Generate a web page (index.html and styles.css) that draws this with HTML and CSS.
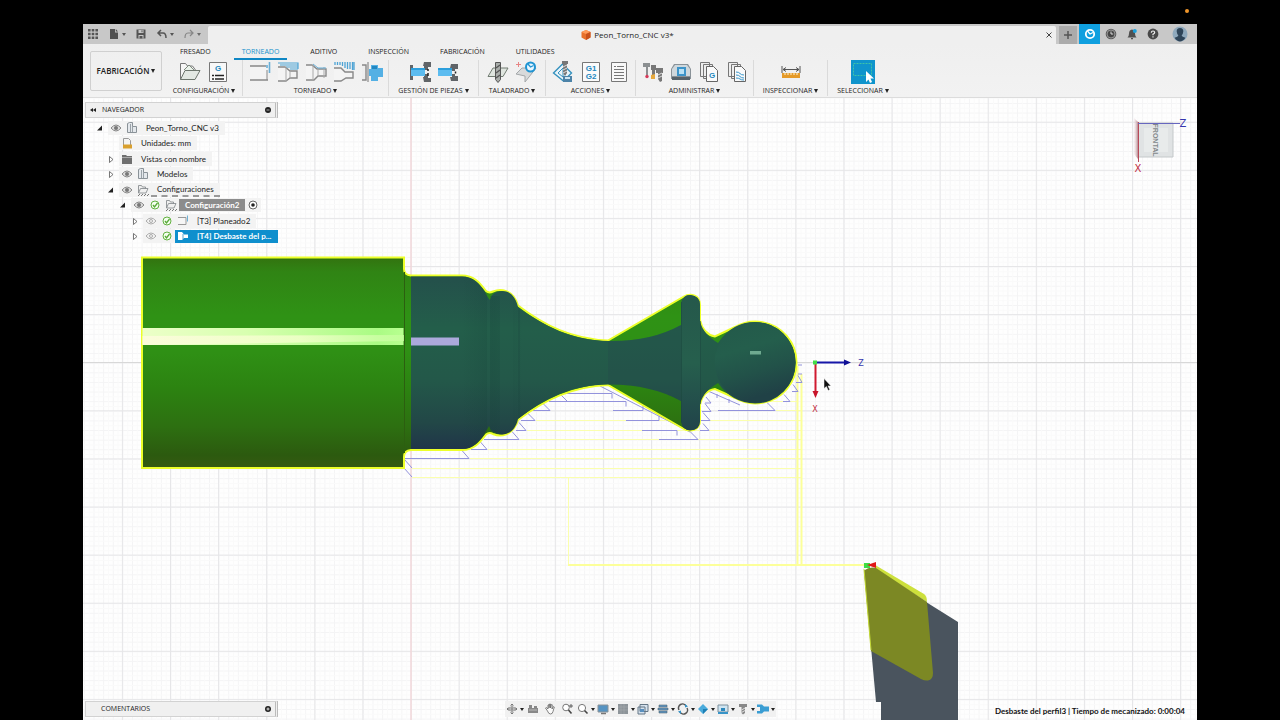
FILE: index.html
```html
<!DOCTYPE html>
<html lang="es">
<head>
<meta charset="utf-8">
<title>Peon_Torno_CNC v3*</title>
<link rel="stylesheet" href="styles.css">
</head>
<body>
<svg class="rec-dot" viewBox="0 0 6 6"><circle cx="3" cy="3" r="2" fill="#f0962a"/></svg>
<div class="app">
  <header class="titlebar">
    <div class="quick">
      <button class="q" aria-label="Panel de datos"><svg viewBox="0 0 12 12"><path d="M1 1h2.600v2.600h-2.600zM4.700 1h2.600v2.600h-2.600zM8.400 1H11v2.600H8.400zM1 4.700h2.600v2.600H1zM4.700 4.700h2.600v2.600H4.700zM8.400 4.700H11v2.600H8.400zM1 8.400h2.600V11H1zM4.700 8.400h2.600V11H4.700zM8.400 8.400H11V11H8.400z" fill="#555"/></svg></button>
      <button class="q wide" aria-label="Archivo"><svg viewBox="0 0 12 12"><path d="M2 1h5v3.500h3V11H2zM7.800 1L10 3.600H7.800z" fill="#505050"/></svg><i class="caret"></i></button>
      <button class="q" aria-label="Guardar"><svg viewBox="0 0 12 12"><path d="M1.500 1.500h9v9h-9z" fill="#555"/><path d="M3.500 2h5v3h-5zM3.500 7h5v3.500h-5z" fill="#c8c8c8"/><path d="M4.500 8h3v2.500h-3zM6.500 2.300h1v2h-1z" fill="#555"/></svg></button>
      <button class="q wide" aria-label="Deshacer"><svg viewBox="0 0 12 12"><path d="M5 2L2 5l3 3M2 5h5q3 0 3 5" fill="none" stroke="#555" stroke-width="1.500"/></svg><i class="caret"></i></button>
      <button class="q wide dim" aria-label="Rehacer"><svg viewBox="0 0 12 12"><path d="M7 2l3 3-3 3M10 5H5Q2 5 2 10" fill="none" stroke="#777" stroke-width="1.200"/></svg><i class="caret"></i></button>
    </div>
    <div class="doc">
      <span class="doc-name"><svg viewBox="0 0 10 10"><path d="M5 0l4.500 2v5.500L5 10 .5 7.500V2z" fill="#e8702a"/><path d="M5 0l4.500 2L5 4 .5 2z" fill="#ff9a58"/><path d="M5 4l4.500-2v5.500L5 10z" fill="#c9501a"/></svg>Peon_Torno_CNC v3*</span>
      <button class="doc-close" aria-label="Cerrar"><svg viewBox="0 0 8 8"><path d="M1.500 1.500l5 5m0-5l-5 5" stroke="#444"/></svg></button>
    </div>
    <div class="account">
      <button class="plus" aria-label="Nueva pestaña"><svg viewBox="0 0 12 12"><path d="M6 2v8M2 6h8" stroke="#555" stroke-width="1.500"/></svg></button>
      <button class="ext" aria-label="Extensiones"><svg viewBox="0 0 12 12"><circle cx="6" cy="6" r="4.200" fill="none" stroke="#fff" stroke-width="1.800"/><path d="M3.500 3l2.500 3L9 4.500" stroke="#fff" fill="none" stroke-width="1.200"/></svg></button>
      <button class="acc" aria-label="Trabajos"><svg viewBox="0 0 12 12"><circle cx="6" cy="6" r="5.300" fill="#5c5c5c"/><circle cx="6" cy="6" r="4" fill="none" stroke="#aaa" stroke-width=".7"/><circle cx="6" cy="6" r="3" fill="#444"/><path d="M6 3.500V6h2.200" stroke="#ddd" fill="none"/></svg></button>
      <button class="acc" aria-label="Notificaciones"><svg viewBox="0 0 12 12"><path d="M1.500 9.500Q3 8 3 5.500 3 2 6 1.500 9 2 9 5.500q0 2.500 1.500 4zM5 10h2v1.300H5z" fill="#505050"/><circle cx="8.800" cy="3" r="2" fill="#1ba0dc"/></svg></button>
      <button class="acc" aria-label="Ayuda"><svg viewBox="0 0 12 12"><circle cx="6" cy="6" r="5.400" fill="#484848"/><path d="M4.300 4.700Q4.400 3 6 3t1.700 1.500Q7.700 5.500 6 6.200V7.300M6 8.200v1.300" stroke="#eee" stroke-width="1.200" fill="none"/></svg></button>
      <button class="acc user" aria-label="Cuenta"><svg viewBox="0 0 16 16"><circle cx="8" cy="8" r="7.500" fill="#8fa9bd"/><path d="M8 2q3.500 0 3.300 3.500Q11 8.500 9.600 9.500q.4 1.200 3.800 2.200Q11 15.500 8 15.500t-5.400-3.800Q6 10.700 6.400 9.500 5 8.500 4.700 5.500 4.500 2 8 2z" fill="#2f4559"/></svg></button>
    </div>
  </header>

  <div class="ribbon">
    <button class="workspace">FABRICACIÓN<i class="caret"></i></button>
    <div class="ribbon-main">
      <nav class="tabs">
        <button>FRESADO</button><button class="on">TORNEADO</button><button>ADITIVO</button><button>INSPECCIÓN</button><button>FABRICACIÓN</button><button>UTILIDADES</button>
      </nav>
      <div class="groups">
        <section class="group">
          <div class="tools">
            <button aria-label="Configuración"><svg viewBox="0 0 22 22"><path d="M1.500 18.500V2.500h5l2 2.500h5l3 4" fill="#f6f6f6" stroke="#777"/><path d="M5 9l5-5 6 6" fill="#eaf2ea" stroke="#7c887c"/><path d="M1.500 18.500L6 9.500h15l-5 9z" fill="#e3e8e3" stroke="#6d756d"/></svg></button>
            <button aria-label="Programa NC"><svg viewBox="0 0 22 22"><path d="M2.500 1.500h17v19h-17z" fill="#f8f8f8" stroke="#777"/><text x="11" y="10" class="svg-g">G</text><path d="M5 14.500h2m1 0h9M5 18h2m1 0h9" stroke="#222" stroke-width="1.300"/></svg></button>
          </div>
          <button class="glabel">CONFIGURACIÓN<i class="caret"></i></button>
        </section>
        <section class="group">
          <div class="tools">
            <button aria-label="Refrentado"><svg viewBox="0 0 22 22"><path d="M1 5h17v14H1" fill="#f4f4f4"/><path d="M1 5h16M1 19h18" stroke="#888" stroke-width="1.600"/><path d="M18 9v10" stroke="#888"/><path d="M20.500 1v11M18 7V4" stroke="#69aed6" stroke-width="1.600"/></svg></button>
            <button aria-label="Perfilado"><svg viewBox="0 0 22 22"><path d="M1 6h7l5 4h7v7h-7l-4 3H1" fill="#f4f4f4" stroke="#888" stroke-width="1.400"/><path d="M1 2h20v6M3 4h18M9 6h12M13 8h8" fill="none" stroke="#4da3d4" stroke-width="1.200"/><path d="M9 6v14M13 10v7" stroke="#aaa"/></svg></button>
            <button aria-label="Acabado"><svg viewBox="0 0 22 22"><path d="M1 4h6l5 4h9v7h-8l-4 4H1" fill="#f4f4f4" stroke="#888" stroke-width="1.400"/><path d="M8 4v15M13 8v7M19 6v11" stroke="#aaa"/><path d="M8 3l5 4h8" fill="none" stroke="#69aed6"/></svg></button>
            <button aria-label="Ranurado"><svg viewBox="0 0 22 22"><path d="M1 7h7l4 4h8v6h-7l-5 3H1" fill="#f4f4f4" stroke="#888" stroke-width="1.400"/><path d="M2 1v3M4.500 1v3M7 1v3M9.500 1v4M12 1v6M14.500 1v7M17 1v7M19.500 1v8M21 1v8" stroke="#4da3d4" stroke-width="1.300"/></svg></button>
            <button aria-label="Tronzado"><svg viewBox="0 0 22 22"><path d="M1 4h4v15H1" fill="#eee" stroke="#888" stroke-width="1.400"/><path d="M7 1v20" stroke="#777"/><path d="M10 4h7v3h5v9h-5v4h-7v-5H8V8h2z" fill="#54b0e4"/><path d="M11 5h5v3h-5z" fill="#2388c2"/></svg></button>
          </div>
          <button class="glabel">TORNEADO<i class="caret"></i></button>
        </section>
        <section class="group">
          <div class="tools">
            <button aria-label="Transferir pieza"><svg viewBox="0 0 22 22"><path d="M1 4h3v4l3 2v3l-3 2v4H1zM15 1h7v5h-3v3h-4V5h-1zM15 21h7v-4h-3v-4h-4v3h-1z" fill="#606468"/><path d="M2 7h14v8H2z" fill="#5cbcf0"/><path d="M2 7h14v2H2z" fill="#2c9fdc"/><path d="M19 8v2m0 2v3" stroke="#222" stroke-width="1.500"/></svg></button>
            <button aria-label="Sujetar pieza"><svg viewBox="0 0 22 22"><path d="M14 3h7v5h-3v2h-3V7h-2zM14 20h7v-5h-3v-2h-3v3h-2z" fill="#606468"/><path d="M1 7h14v8H1z" fill="#5cbcf0"/><path d="M1 7h14v2H1z" fill="#2c9fdc"/><path d="M18.500 10.500v2" stroke="#222" stroke-width="1.500"/></svg></button>
          </div>
          <button class="glabel">GESTIÓN DE PIEZAS<i class="caret"></i></button>
        </section>
        <section class="group">
          <div class="tools">
            <button aria-label="Taladrado"><svg viewBox="0 0 22 22"><path d="M1 15.500L6 7h15l-5 8.500z" fill="#dfe5df" stroke="#727c72"/><path d="M8.500 1.500h5v17l-2.500 3-2.500-3z" fill="#a9adaa" stroke="#555"/><path d="M9 7l4-3M9 12l4-3M9 17l4-3" stroke="#555" stroke-width="1.300"/></svg></button>
            <button aria-label="Reconocimiento de agujeros"><svg viewBox="0 0 22 22"><path d="M1 13L7 7h14l-7 9-4 5v-6z" fill="#d8dadb" stroke="#a4a8aa"/><path d="M3.500 1v5M1 3.500h5" stroke="#e78585"/><circle cx="15.500" cy="6" r="4.500" fill="#e8f6ff" stroke="#1f94d2" stroke-width="2"/><path d="M13 3l2.500 3 3-1.500" stroke="#1f94d2" stroke-width="1.300" fill="none"/></svg></button>
          </div>
          <button class="glabel">TALADRADO<i class="caret"></i></button>
        </section>
        <section class="group tight">
          <div class="tools">
            <button aria-label="Simular"><svg viewBox="0 0 22 22"><path d="M1.500 12l9-9 9 9-8 8z" fill="#e9f4fa" stroke="#3591bd" stroke-width="1.400"/><path d="M6 12l5-5v9z" fill="none" stroke="#3591bd"/><path d="M10 0h6v3h-1v9l-2 3-2-3V3h-1z" fill="#777"/><path d="M11 6l4-2m-4 5l4-2m-4 5l4-2" stroke="#ddd"/><path d="M11 15h9v6h-9z" fill="#4d83a8"/><path d="M13 16h5v2h-5z" fill="#cfe5f2"/></svg></button>
            <button aria-label="Posprocesar"><svg viewBox="0 0 22 22"><path d="M2.500 1.500h17v19h-17z" fill="#fafafa" stroke="#777"/><text x="11" y="10" class="svg-g">G1</text><text x="11" y="18" class="svg-g">G2</text></svg></button>
            <button aria-label="Hoja de configuración"><svg viewBox="0 0 22 22"><path d="M3.500 1.500h15v19h-15z" fill="#f8f8f8" stroke="#777"/><path d="M6 5.500h2m1 0h7M6 8.500h10M6 11.500h10M6 14.500h10M6 17.500h10" stroke="#777"/></svg></button>
          </div>
          <button class="glabel">ACCIONES<i class="caret"></i></button>
        </section>
        <section class="group">
          <div class="tools">
            <button aria-label="Biblioteca de herramientas"><svg viewBox="0 0 22 22"><path d="M1 2h7v4H6v8H4V6H1z" fill="#8b8f91"/><circle cx="5" cy="15.500" r="1.700" fill="#d63a5a"/><path d="M9 4h5v5h-1v6h-3V9H9z" fill="#777"/><path d="M9 14l4-1v5H9z" fill="#e7a93e"/><path d="M14 7h7v5h-1v8l-2 1-2-3v-6h-2z" fill="#777"/><path d="M16 14l4-2m-4 5l4-2" stroke="#ddd"/></svg></button>
            <button aria-label="Biblioteca de máquinas"><svg viewBox="0 0 22 22"><path d="M1 8l3-5h14l3 5v10H1z" fill="#8a9298"/><path d="M2 8l3-4h12l3 4v7H2z" fill="#cfd8dd"/><path d="M7 6h9v9H7z" fill="#3d94c9"/><path d="M9 8h5v5H9z" fill="#b9e1f5"/><path d="M2 16h18v3H2z" fill="#56626a"/></svg></button>
            <button aria-label="Biblioteca de posprocesadores"><svg viewBox="0 0 22 22"><path d="M2.500 1.500h9v14h-9zM5.500 3.500h9v14h-9z" fill="#eee" stroke="#777"/><path d="M8.500 5.500h7l4 4v11h-11z" fill="#fafafa" stroke="#666"/><text x="14" y="17" class="svg-g">G</text></svg></button>
            <button aria-label="Biblioteca de plantillas"><svg viewBox="0 0 22 22"><path d="M2.500 1.500h9v14h-9zM5.500 3.500h9v14h-9z" fill="#eee" stroke="#777"/><path d="M8.500 5.500h7l4 4v11h-11z" fill="#fafafa" stroke="#666"/><path d="M10 11q3 0 4 1.500t4 1.500M10 14q3 0 4 1.500t4 1.500M10 17q3 0 4 1t4 1" fill="none" stroke="#3695cb"/></svg></button>
          </div>
          <button class="glabel">ADMINISTRAR<i class="caret"></i></button>
        </section>
        <section class="group">
          <div class="tools">
            <button aria-label="Medir"><svg viewBox="0 0 22 22"><path d="M2 5v7M20 5v7M3 8.500h16M6 6.500l-3 2 3 2m10-4l3 2-3 2" fill="none" stroke="#555"/><path d="M2 12h18v5H2z" fill="#e59a28"/><path d="M5 12v2m3-2v2m3-2v2m3-2v2m3-2v2" stroke="#fff3d5"/></svg></button>
          </div>
          <button class="glabel">INSPECCIONAR<i class="caret"></i></button>
        </section>
        <section class="group last">
          <div class="tools">
            <button class="select-tool" aria-label="Seleccionar"><svg viewBox="0 0 24 24"><path d="M2.500 3.500h18v12h-18z" fill="none" stroke="#3fc3a8" stroke-dasharray="2 1"/><path d="M15 11v11l2.500-2.500L19 23l2-1-1.500-3.500H23z" fill="#fff"/></svg></button>
          </div>
          <button class="glabel">SELECCIONAR<i class="caret"></i></button>
        </section>
      </div>
    </div>
  </div>

  <main class="viewport">
    <svg class="scene" viewBox="83 98 1114 622" preserveAspectRatio="xMinYMin slice">
      <defs>
        <pattern id="minor" x="411" y="362.700" width="9.620" height="9.620" patternUnits="userSpaceOnUse"><path d="M0 .5H9.620M.5 0V9.620" stroke="#f4f4f5"/><path d="M0 5.300H9.620M5.300 0V9.620" stroke="#fafafa"/></pattern>
        <pattern id="major" x="410.500" y="362.200" width="48.100" height="48.100" patternUnits="userSpaceOnUse"><path d="M0 .5H48.100M.5 0V48.100" stroke="#e6e6e8"/></pattern>
        <linearGradient id="stock" gradientUnits="userSpaceOnUse" x1="0" x2="0" y1="257" y2="468"><stop offset="0" stop-color="#33720f"/><stop offset=".07" stop-color="#308414"/><stop offset=".28" stop-color="#2f9215"/><stop offset=".45" stop-color="#2f9015"/><stop offset=".62" stop-color="#2c8311"/><stop offset=".8" stop-color="#2d7011"/><stop offset=".94" stop-color="#2c5a0f"/><stop offset="1" stop-color="#365a12"/></linearGradient>
        <linearGradient id="part" x2="0" y2="1"><stop offset="0" stop-color="#24504b"/><stop offset=".3" stop-color="#235e4a"/><stop offset=".6" stop-color="#235849"/><stop offset=".85" stop-color="#224747"/><stop offset="1" stop-color="#203549"/></linearGradient>
        <linearGradient id="shine"><stop offset="0" stop-color="#ecffc8"/><stop offset=".4" stop-color="#d8ffb0"/><stop offset=".9" stop-color="#aafb84"/><stop offset="1" stop-color="#b8ff90"/></linearGradient>
        <linearGradient id="glow"><stop offset="0" stop-color="#fffbe0"/><stop offset=".6" stop-color="#f4ffcc"/><stop offset="1" stop-color="#c4ff9c"/></linearGradient>
        <linearGradient id="bands"><stop offset="0" stop-color="#123c34" stop-opacity="0"/><stop offset=".5" stop-color="#123c34" stop-opacity=".2"/><stop offset="1" stop-color="#123c34" stop-opacity="0"/></linearGradient>
        <linearGradient id="ball" x2=".3" y2="1"><stop offset="0" stop-color="#23594a"/><stop offset=".4" stop-color="#245e4c"/><stop offset=".7" stop-color="#225249"/><stop offset="1" stop-color="#204146"/></linearGradient>
        <linearGradient id="flange" x2="0" y2="1"><stop offset="0" stop-color="#25584b"/><stop offset=".5" stop-color="#265f4d"/><stop offset="1" stop-color="#21434a"/></linearGradient>
        <linearGradient id="wedge"><stop offset="0" stop-color="#e7d3d6" stop-opacity=".2"/><stop offset="1" stop-color="#b98b93"/></linearGradient>
      </defs>
      <path d="M83 98h1114v622H83z" fill="#fefefe"/>
      <path d="M83 98h1114v622H83z" fill="url(#minor)"/>
      <path d="M83 98h1114v622H83z" fill="url(#major)"/>
      <path d="M83 362.500h1114" stroke="#d8d8d8"/>
      <path d="M411 98v622" stroke="#f6cfd2"/>

      <g fill="none" stroke="#fbffae">
        <path d="M745 401.500h52M776 410.500h25M536 420.500h265M527 430.500h274M520 439.500h281M488 449.500h313M470 458.500h331M412 468.500h389M412 477.500h389M568.500 478v87"/>
        <path d="M568 565h296M797.500 366v198M801.500 374v190" stroke="#fcff9a" stroke-width="2"/>
      </g>
      <g fill="none" stroke="#9292dc">
        <path d="M404 458.500h65l-7-8M471 449.500h16l-7-8M484 439.500h35l-7-8M516 430.500h10l-7-8M521 420.500h14l-8-8M533 410.500h17l-8-8M549 401.500h77v5M568 402l-8-8M563 393.500h49v5M613 410.500h30v-5M626 420.500h33v-5M642 430.500h35v5M659 439.500h39l-9-9M600 386l90 46M404 459l8 9M404 468l8 9"/>
        <path d="M700 430.500h9l-6-7M700 420.500h10l-7-8M702 411.500h9l-6-8M705 403h6l-5-6M718 410.500h57l-8-8M708 391l32 14M717 394v4M729 399v4M783 401.500h7l-6-7M792 391.500h6l-5-7M796 382.500h6l-4-7M798 374h4M798 365h4"/>
      </g>

      <path d="M142 257.500H404V269Q404 275 411 275.500H462C474 275.500 480 283 486 291Q489 293.500 493 291.500C500 288.500 513 289 518 305.500C545 326 572 339 608 340.500L683 297C690 293 700 294 700 305V320C702 330 708 335 715 336.500L735 327A41 41 0 1 1 735 398L715 389C708 390 702 395 700 405V420C700 431 690 432.500 683 428.500L608 385C572 386.500 545 399.500 518 420C513 436.500 500 437 493 434Q489 432 486 434.500C480 442.500 474 450 462 450H411Q404 450.500 404 457V468H142Z" fill="url(#stock)" stroke="#ecff2a" stroke-width="2"/>
      <path d="M142.500 328H403.500v17H142.500z" fill="url(#shine)"/><path d="M142.500 336L404 335v6L142.500 345z" fill="url(#glow)" opacity=".8"/>
      <path d="M404.500 272v181" stroke="#2c5f10"/>
      <path d="M411 276.500H462C473 276.500 480 284 485 292Q488 298 490 300Q491 291.500 502 291C511 291 516 298 518 307C545 327 572 340 608 341Q650 342 681 325V303Q683 295 690 295Q700 296 700 305V321C702 331 710 338 718 343Q732 322 755 322A40.500 40.500 0 0 1 755 403.500Q732 403 718 383C710 388 702 394 700 405V421Q700 430 690 430.500Q683 430 681 422V401Q650 384 608 384.500C572 385 545 398 518 419C516 428 511 434 502 434.500Q491 434 489 426Q488 428 485 433C480 441 473 449 462 449H411Z" fill="url(#part)"/>
      <path d="M462 277q17 4 25 18v135q-8 15-25 19zM490 296h10v136h-10zM513 300h10v125h-10z" fill="url(#bands)"/>
      <path d="M608 341Q650 342 681 325V401Q650 384 608 384.500z" fill="#23444c" opacity=".25"/>
      <path d="M682 303q1-8 8-8 10 1 10 10v116q-1 9-10 9-8 0-8-8z" fill="url(#flange)"/>
      <path d="M681.500 302v121M700.500 321v83M519 308v110" stroke="#1c4640" opacity=".5"/>
      <circle cx="755" cy="362.500" r="40.300" fill="url(#ball)"/>
      <path d="M411 337.500h48v8h-48z" fill="#aca9db"/><path d="M750 351h11v3.500h-11z" fill="#6faa90"/>

      <path d="M815.500 362.500V391" stroke="#d01a30" stroke-width="2"/><path d="M812.500 391h6l-3 7z" fill="#c8142a"/>
      <path d="M817 362.500h28" stroke="#1717a8" stroke-width="2"/><path d="M844 359.500v6l7-3z" fill="#101095"/><path d="M813 360.500h4v4h-4z" fill="#42dd48"/>
      <text x="861" y="366" class="axis z">Z</text><text x="815" y="412" class="axis x">X</text>
      <path d="M824 378.500v10l2.400-2 1.800 4 1.600-.8-1.800-3.800h3z" fill="#111" stroke="#fff" stroke-width=".5"/>

      <path d="M864 570L926 602L958 622V720H881V702H876z" fill="#4a545e"/>
      <path d="M876 565.500L924 594q3 2 3 8l-52-33z" fill="#cde03c"/>
      <path d="M864 570.500Q870 566 876 568L927 602L933 673Q933 680 928 680.500Q925 681 921 679L871 651Z" fill="#7c8824"/>
      <path d="M864 569l7 81" stroke="#c4da35"/>
      <path d="M864 563h6v5h-6z" fill="#3ddd45"/><path d="M867 565l9-3v6z" fill="#e01717"/>

      <path d="M1138 123h35v34h-35z" fill="#e0e3e4" stroke="#c4c8ca"/><path d="M1144 128h24v24h-24z" fill="#e8ebeb"/>
      <path d="M1134 118l4 4v37l-4-5z" fill="url(#wedge)"/>
      <path d="M1138.500 122v40" stroke="#b84a59"/><path d="M1138 123.500h42" stroke="#6767bf"/>
      <text class="face" transform="translate(1152.500 140) rotate(90)">FRONTAL</text>
      <text x="1183" y="127" class="axis z large">Z</text><text x="1138" y="172" class="axis x large">X</text>
    </svg>

    <aside class="browser">
      <div class="panel-head"><svg viewBox="0 0 8 8"><path d="M4 2v4L1 4zM7 2v4L4 4z" fill="#222"/></svg><span>NAVEGADOR</span><button aria-label="Contraer"><svg viewBox="0 0 8 8"><circle cx="4" cy="4" r="3" fill="#222"/><path d="M2.500 4h3" stroke="#aaa"/></svg></button></div>
      <svg class="symbols"><defs>
        <symbol id="open" viewBox="0 0 16 14"><path d="M10 4.500v5H5z" fill="#222"/></symbol>
        <symbol id="closed" viewBox="0 0 16 14"><path d="M6.500 4.500l3.500 3-3.500 3z" fill="#fff" stroke="#555" stroke-width=".8"/></symbol>
        <symbol id="eye" viewBox="0 0 16 14"><path d="M3 7q5-6 10 0-5 6-10 0z" fill="#ddd" stroke="#888"/><circle cx="8" cy="7" r="2" fill="#777"/></symbol>
        <symbol id="eyeoff" viewBox="0 0 16 14"><path d="M3 7q5-6 10 0-5 6-10 0z" fill="#f4f4f4" stroke="#999" stroke-width=".8"/><circle cx="8" cy="7" r="1.500" fill="none" stroke="#999" stroke-width=".8"/></symbol>
        <symbol id="model" viewBox="0 0 16 14"><path d="M3.500 2.500l2-1h3v4h4v6h-9z" fill="#e4e8ec" stroke="#8a9298"/><path d="M6.500 3v8m2-6v6" stroke="#9aa2a8"/></symbol>
        <symbol id="ok" viewBox="0 0 16 14"><circle cx="8" cy="7" r="4" fill="#f5fff0" stroke="#62b141"/><path d="M6 7l1.500 2L10.500 5" fill="none" stroke="#58aa38" stroke-width="1.300"/></symbol>
        <symbol id="setup" viewBox="0 0 16 14"><path d="M3.500 10V2.500h3l1 1.500h3v2M3.500 10l2-4.500h7.500L11 10z" fill="#f0f0f0" stroke="#8a8f92" stroke-width=".9"/><path d="M3 13l2-2m1 2l2-2m1 2l2-2m1 2l2-2" stroke="#777"/></symbol>
      </defs></svg>
      <ul class="tree">
        <li class="l0"><svg><use href="#open"/></svg><span class="chip"><svg><use href="#eye"/></svg><svg><use href="#model"/></svg><b>Peon_Torno_CNC v3</b></span></li>
        <li class="l1 leaf"><span class="chip"><svg viewBox="0 0 16 14"><path d="M4.500 2.500h5l2 2v7h-7z" fill="#f4f4f4" stroke="#999"/><path d="M4 8.500h9v4H4z" fill="#d9a02e"/></svg><b>Unidades: mm</b></span></li>
        <li class="l1"><svg><use href="#closed"/></svg><span class="chip"><svg viewBox="0 0 16 14"><path d="M3 3h4l1 1h5v8H3z" fill="#6f6f6f"/><path d="M3 5.500h10" stroke="#aaa"/></svg><b>Vistas con nombre</b></span></li>
        <li class="l1"><svg><use href="#closed"/></svg><span class="chip"><svg><use href="#eye"/></svg><svg><use href="#model"/></svg><b>Modelos</b></span></li>
        <li class="l1"><svg><use href="#open"/></svg><span class="chip hatch"><svg><use href="#eye"/></svg><svg><use href="#setup"/></svg><b>Configuraciones</b></span></li>
        <li class="l2"><svg><use href="#open"/></svg><span class="chip"><svg><use href="#eye"/></svg><svg><use href="#ok"/></svg><svg><use href="#setup"/></svg><b class="active">Configuración2</b><svg viewBox="0 0 16 14"><circle cx="8" cy="7" r="4" fill="#fff" stroke="#666"/><circle cx="8" cy="7" r="1.800" fill="#222"/></svg></span></li>
        <li class="l3"><svg><use href="#closed"/></svg><span class="chip"><svg><use href="#eyeoff"/></svg><svg><use href="#ok"/></svg><svg viewBox="0 0 16 14"><path d="M3 3.500h8v7H3" fill="#f6f6f6" stroke="#999"/><path d="M12.500 1.500v6" stroke="#6fb3d8"/></svg><b>[T3] Planeado2</b></span></li>
        <li class="l3"><svg><use href="#closed"/></svg><span class="chip"><svg><use href="#eyeoff"/></svg><svg><use href="#ok"/></svg></span><span class="picked"><svg viewBox="0 0 16 14"><path d="M3 3h4l2 2.500h4v3.500H9L7 11H3z" fill="#fff"/><path d="M8 5v5" stroke="#5aa8d0"/></svg><b>[T4] Desbaste del p...</b></span></li>
      </ul>
    </aside>

    <footer class="bottom">
      <div class="panel-head comments"><span>COMENTARIOS</span><button aria-label="Añadir comentario"><svg viewBox="0 0 8 8"><circle cx="4" cy="4" r="3" fill="#222"/><path d="M2.500 4h3M4 2.500v3" stroke="#ddd"/></svg></button></div>
      <div class="navbar">
        <button class="m" aria-label="Órbita"><svg viewBox="0 0 12 12"><path d="M6 1v10M1 6h10M4.500 2.500L6 1l1.500 1.500M4.500 9.500L6 11l1.500-1.500M2.500 4.500L1 6l1.500 1.500M9.500 4.500L11 6 9.500 7.500" fill="none" stroke="#666" stroke-width=".8"/><ellipse cx="6" cy="6" rx="3.500" ry="2" fill="none" stroke="#888" stroke-width=".8"/></svg><i class="caret"></i></button>
        <button aria-label="Mirar a"><svg viewBox="0 0 12 12"><path d="M1 5h10v5H1zM2 2h3v3H2zM7 3h3v2H7z" fill="#888"/><path d="M2 7h8" stroke="#bbb"/></svg></button>
        <button aria-label="Encuadre"><svg viewBox="0 0 12 12"><path d="M3.500 8L1.500 5l1-.5L4 6V2l1-.3V5L5.500 1l1 0V5l.8-3.500 1 .3L8 6l1.500-2.500.8.500L9 8.500Q8.500 11 6.500 11T3.500 8z" fill="#fafafa" stroke="#666" stroke-width=".8"/></svg></button>
        <button aria-label="Zoom"><svg viewBox="0 0 12 12"><circle cx="5" cy="4.500" r="3.300" fill="#fff" stroke="#777"/><path d="M7.500 7l3 3.500" stroke="#444" stroke-width="1.600"/><path d="M10 1v4M8 3h4" stroke="#444" stroke-width=".8"/></svg></button>
        <button class="m" aria-label="Ajustar"><svg viewBox="0 0 12 12"><circle cx="5" cy="5" r="3.600" fill="#fff" stroke="#777"/><path d="M7.500 7.500l3 3" stroke="#444" stroke-width="1.600"/></svg><i class="caret"></i></button>
        <button class="m" aria-label="Visualización"><svg viewBox="0 0 12 12"><path d="M1 2h10v7H1z" fill="#5593c2" stroke="#8a9298"/><path d="M4 10.500h5" stroke="#777" stroke-width="1.500"/></svg><i class="caret"></i></button>
        <button class="m" aria-label="Rejilla"><svg viewBox="0 0 12 12"><path d="M1 1h10v10H1z" fill="#8d9499"/><path d="M1 4h10M1 7h10M4 1v10M7 1v10" stroke="#a9afb3" stroke-width=".5"/></svg><i class="caret"></i></button>
        <button class="m" aria-label="Ventanas"><svg viewBox="0 0 12 12"><path d="M3 1.500h8v7H3zM1 4h7v7H1z" fill="#d6e2ed" stroke="#657786"/><path d="M3 6h4v3H3z" fill="#5a8fbe"/></svg><i class="caret"></i></button>
        <button class="m" aria-label="Capas"><svg viewBox="0 0 12 12"><path d="M2 2h8v2H2zM1 5h10v2H1zM2 8h8v2H2z" fill="#5f98c6" stroke="#526470" stroke-width=".6"/></svg><i class="caret"></i></button>
        <button class="m" aria-label="Actualizar"><svg viewBox="0 0 12 12"><path d="M2 7a4 4 0 0 1 7-4M10 5a4 4 0 0 1-7 4" fill="none" stroke="#555" stroke-width="1.500"/><path d="M8 1l3 2.500-3 1zM4 11L1 8.500l3-1z" fill="#3290c5"/></svg><i class="caret"></i></button>
        <button class="m" aria-label="Pieza bruta"><svg viewBox="0 0 12 12"><path d="M6 1l5 5-5 5-5-5z" fill="#4aabdc"/><path d="M6 6l5 0-5 5z" fill="#1e7fb4"/></svg><i class="caret"></i></button>
        <button class="m" aria-label="Máquina"><svg viewBox="0 0 12 12"><path d="M1 2h10v7H1z" fill="#cfe5f2" stroke="#7d8f9b"/><path d="M4 5h4v3H4z" fill="#2d87bb"/><path d="M1 10h10" stroke="#3894c8" stroke-width="2"/></svg><i class="caret"></i></button>
        <button class="m" aria-label="Herramienta"><svg viewBox="0 0 12 12"><path d="M2 1h8v3H8v6l-2 1.500L4.500 10V4H2z" fill="#888"/><path d="M4.500 7L8 5M4.500 9.500L8 7.500" stroke="#ddd"/></svg><i class="caret"></i></button>
        <button class="m" aria-label="Trayectoria"><svg viewBox="0 0 12 12"><path d="M0 1.500h5l2 2h5v5H7l-2 2H0V8h3V4H0z" fill="#3a9dd3"/></svg><i class="caret"></i></button>
      </div>
      <output class="status">Desbaste del perfil3 | Tiempo de mecanizado: 0:00:04</output>
    </footer>
  </main>
</div>
</body>
</html>
```
FILE: styles.css
```css
* { box-sizing: border-box; }
body {
  margin: 0;
  height: 100vh;
  padding: 24px 83px 0;
  background: #000;
  color: #222;
  font: 8px/12px Lato, "Open Sans", sans-serif;
  overflow: hidden;
}
button {
  display: flex;
  align-items: center;
  justify-content: center;
  margin: 0;
  padding: 0;
  border: 0;
  background: none;
  color: inherit;
  font: inherit;
  white-space: nowrap;
}
svg { display: block; flex: none; }
.rec-dot { position: absolute; top: 8px; right: 90px; width: 6px; height: 6px; }
.app { display: flex; flex-direction: column; height: 100%; background: #efefef; }
.caret {
  flex: none;
  border: solid transparent;
  border-width: 4px 2px 0;
  border-top-color: #222;
  margin-left: 2px;
}

.titlebar { display: flex; height: 20px; background: #c8c8c8; }
.quick { display: flex; align-items: center; gap: 9px; width: 125px; padding-left: 4px; }
.q svg { width: 12px; height: 12px; }
.q .caret { border-top-color: #555; border-width: 3px 2px 0; }
.q.dim { opacity: .8; }
.doc {
  flex: 1;
  display: flex;
  align-items: center;
  margin-top: 2px;
  background: #efefef;
  border-radius: 2px 2px 0 0;
}
.doc-name {
  flex: 1;
  display: flex;
  align-items: center;
  justify-content: center;
  gap: 3px;
  padding-left: 6px;
  font-family: "Open Sans", sans-serif;
}
.doc-name svg { width: 10px; height: 10px; }
.doc-close { width: 15px; height: 16px; }
.doc-close svg { width: 8px; height: 8px; }
.account { display: flex; align-items: stretch; width: 141px; }
.account svg { width: 12px; height: 12px; }
.plus { width: 18px; margin: 2px 2px 0 3px; background: #ababab; }
.ext { width: 21px; background: #0f9fdf; }
.acc { width: 21px; }
.user { width: 33px; }
.account .user svg { width: 16px; height: 16px; }

.ribbon {
  display: flex;
  height: 54px;
  border-bottom: 1px solid #dcdcdc;
  background: linear-gradient(#efefef, #f2f2f2);
  font-family: "Open Sans", sans-serif;
  font-size: 7px;
}
.workspace {
  width: 72px;
  height: 40px;
  margin: 7px 4px 0 7px;
  border: 1px solid #d0d0d0;
  border-radius: 2px;
  font-size: 8px;
  font-weight: 600;
}
.tabs { display: flex; gap: 15px; height: 16px; padding-left: 6px; }
.tabs button { padding: 1px 8px 0; height: 16px; border-bottom: 2px solid transparent; }
.tabs .on { color: #1590cc; border-color: #0f87c4; }
.groups {
  display: grid;
  grid-template-columns: 77px 146px 90px 67px 90px 118px 74px 70px;
}
.group { display: flex; flex-direction: column; align-items: center; height: 36px; border-right: 1px solid #dadada; }
.group.last { border-right: 0; }
.tools { display: flex; }
.tools button { width: 28px; height: 24px; }
.tools svg { width: 22px; height: 22px; }
.tools .select-tool { width: 24px; background: #0f94cc; }
.tools .select-tool svg { width: 24px; height: 24px; }
.glabel { height: 13px; padding-top: 1px; }
.svg-g { font: bold 8px "Liberation Sans", sans-serif; fill: #2286bd; text-anchor: middle; }

.viewport { position: relative; flex: 1; display: flex; flex-direction: column; justify-content: space-between; overflow: hidden; }
.scene { position: absolute; inset: 0; width: 100%; height: 100%; }
.axis { font: 8px "DejaVu Sans", sans-serif; text-anchor: middle; }
.axis.large { font-size: 10px; }
.axis.z { fill: #3535ad; }
.axis.x { fill: #c22e42; }
.face { font: bold 7px "Liberation Sans", sans-serif; fill: #84898c; text-anchor: middle; }

.browser { position: relative; width: 195px; padding: 4px 0 0 2px; }
.panel-head {
  display: flex;
  align-items: center;
  gap: 5px;
  width: 193px;
  height: 16px;
  padding: 0 3px;
  background: #f0f0f0;
  border: 1px solid #d2d2d2;
  border-right: 3px double #bbb;
  font-family: "Open Sans", sans-serif;
  font-size: 7px;
}
.panel-head span { flex: 1; }
.panel-head svg { width: 8px; height: 8px; }
.symbols { position: absolute; width: 0; height: 0; }
.tree { list-style: none; margin: 2px 0 0; padding: 0; }
.tree li { display: flex; align-items: center; height: 15px; }
.tree li:nth-child(even) { height: 16px; }
.tree svg { width: 16px; height: 14px; }
.tree b { padding: 0 6px; font-weight: 400; line-height: 14px; white-space: nowrap; }
.tree .l0 { padding-left: 7px; }
.tree .l1 { padding-left: 18px; }
.tree .leaf { padding-left: 34px; }
.tree .l2 { padding-left: 30px; }
.tree .l3 { padding-left: 42px; }
.chip, .picked { display: flex; align-items: center; height: 14px; }
.chip { background: #f3f3f3; }
.tree .hatch b { border-bottom: 2px dashed #999; line-height: 12px; }
.tree .active { background: #8c8c8c; color: #fff; font-weight: 700; line-height: 12px; }
.picked { flex: 1; height: 13px; background: #0f8fcd; color: #fff; }
.tree .picked b { font-weight: 700; }

.bottom { position: relative; display: grid; grid-template-columns: 1fr auto 1fr; align-items: start; height: 19px; padding: 0 12px 0 2px; }
.comments { padding-left: 15px; }
.navbar { display: flex; align-items: center; height: 16px; margin-left: 10px; background: #f1f1f1; }
.navbar button { width: 17px; height: 16px; }
.navbar .m { width: 20px; }
.navbar svg { width: 12px; height: 12px; }
.navbar .caret { border-width: 3px 2px 0; }
.status { justify-self: end; padding-top: 4px; color: #111; font-weight: 700; white-space: nowrap; }
```
